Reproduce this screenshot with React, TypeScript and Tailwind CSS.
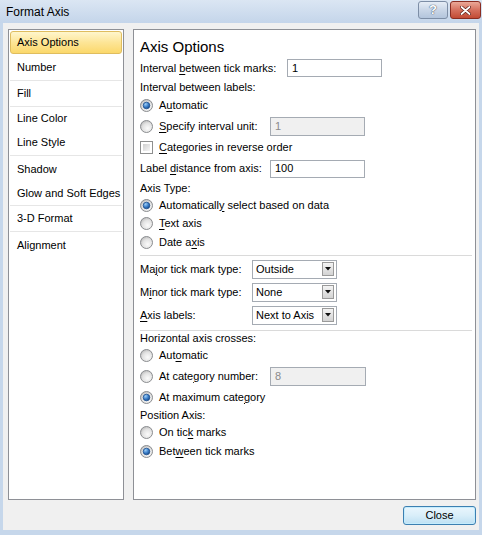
import type { ReactNode } from 'react'

const navItems = [
  { label: 'Axis Options', h: 'h-[23px]', sep: false, active: true },
  { label: 'Number', h: 'h-[27px]', sep: true },
  { label: 'Fill', h: 'h-[26px]', sep: true },
  { label: 'Line Color', h: 'h-[23px]', sep: false },
  { label: 'Line Style', h: 'h-[26px]', sep: true },
  { label: 'Shadow', h: 'h-[26px]', sep: false },
  { label: 'Glow and Soft Edges', h: 'h-[24px]', sep: true },
  { label: '3-D Format', h: 'h-[26px]', sep: true },
  { label: 'Alignment', h: 'h-[26px]', sep: false },
]

function Radio({ checked = false }: { checked?: boolean }) {
  return (
    <svg width="13" height="13" viewBox="0 0 13 13" className="shrink-0">
      <defs>
        <radialGradient id="radioBody" cx="0.6" cy="0.65" r="0.7">
          <stop offset="0" stopColor="#fbfbfb" />
          <stop offset="0.6" stopColor="#e2e2e2" />
          <stop offset="1" stopColor="#b9b9b9" />
        </radialGradient>
        <radialGradient id="radioDot" cx="0.35" cy="0.3" r="0.8">
          <stop offset="0" stopColor="#9fd0f7" />
          <stop offset="0.5" stopColor="#3f82cc" />
          <stop offset="1" stopColor="#103f7c" />
        </radialGradient>
      </defs>
      <circle cx="6.5" cy="6.5" r="6" fill="url(#radioBody)" stroke="#8b8d90" strokeWidth="1" />
      {checked && <circle cx="6.5" cy="6.5" r="3.3" fill="url(#radioDot)" stroke="#1d4f8f" strokeWidth="0.8" />}
    </svg>
  )
}

function Checkbox() {
  return (
    <span className="box-border flex h-[13px] w-[13px] shrink-0 border border-[#8e8f8f] bg-white p-[2px]">
      <span className="flex-1 bg-gradient-to-br from-[#cfcfcf] to-[#f7f7f7]" />
    </span>
  )
}

function TextBox({ value, disabled = false, w, h }: { value: string; disabled?: boolean; w: string; h: string }) {
  return (
    <div
      className={`box-border flex items-center border border-[#a5abb3] pl-[4px] ${w} ${h} ${
        disabled ? 'bg-[#f0f0f0] text-[#8a8a8a]' : 'bg-white text-black'
      }`}
    >
      {value}
    </div>
  )
}

function Select({ value }: { value: string }) {
  return (
    <div className="box-border flex h-[19px] w-[85px] items-center justify-between border border-[#a5abb3] bg-white pl-[3px] pr-[2px]">
      <span>{value}</span>
      <span className="box-border flex h-[14px] w-[12px] items-center justify-center border border-[#9a9a9a] bg-gradient-to-b from-[#f4f4f4] to-[#d3d3d3]">
        <svg width="6" height="4" viewBox="0 0 6 4">
          <path d="M0 0 H6 L3 3.5 Z" fill="#111" />
        </svg>
      </span>
    </div>
  )
}

function RadioRow({ h, checked, children }: { h: string; checked?: boolean; children: ReactNode }) {
  return (
    <div className={`flex items-center ${h}`}>
      <Radio checked={checked} />
      <span className="w-[6px] shrink-0" />
      {children}
    </div>
  )
}

function U({ children }: { children: ReactNode }) {
  return <span className="underline underline-offset-[2px]">{children}</span>
}

export default function App() {
  return (
    <div className="flex h-[535px] w-[482px] flex-col bg-[#c6d7eb] font-['Segoe_UI','Liberation_Sans',Arial,sans-serif] text-[11px] text-black">
      {/* title bar */}
      <div className="flex h-[23px] items-start justify-between bg-gradient-to-b from-[#dbe6f3] to-[#c4d5ea] pl-[6px] pr-[1px] pt-[1px]">
        <span className="flex h-[21px] items-center text-[12px]">Format Axis</span>
        <div className="flex gap-[2px]">
          <div className="box-border flex h-[18px] w-[30px] items-center justify-center rounded-[3px] border border-[#7d8ea6] bg-gradient-to-b from-[#e6edf6] via-[#c9d6e7] to-[#b3c5dc] text-[13px] font-bold text-white [text-shadow:0_0_1px_#3b4c66,0_0_1px_#3b4c66]">
            ?
          </div>
          <div className="box-border flex h-[18px] w-[31px] items-center justify-center rounded-[3px] border border-[#8a2d22] bg-gradient-to-b from-[#eaa898] via-[#d5705e] to-[#c24a34]">
            <svg width="11" height="9" viewBox="0 0 11 9">
              <path d="M1.5 1 L9.5 8 M9.5 1 L1.5 8" stroke="#5a1a12" strokeWidth="3.2" strokeLinecap="round" />
              <path d="M1.5 1 L9.5 8 M9.5 1 L1.5 8" stroke="#fff" strokeWidth="1.8" strokeLinecap="round" />
            </svg>
          </div>
        </div>
      </div>

      {/* body */}
      <div className="mx-[3px] mb-[5px] flex flex-1 flex-col bg-[#f0f0f0] pl-[5px] pr-[3px] pt-[6px]">
        <div className="flex h-[471px] gap-[9px]">
          {/* left nav */}
          <nav className="box-border flex w-[116px] flex-col border border-[#8e9096] bg-white pt-[1px]">
            {navItems.map((item) =>
              item.active ? (
                <div
                  key={item.label}
                  className={`mx-[1px] box-border flex items-center rounded-[3px] border border-[#dfbd5f] bg-gradient-to-b from-[#fff6cc] via-[#fde596] to-[#fbd86a] pl-[6px] ${item.h}`}
                >
                  {item.label}
                </div>
              ) : (
                <div
                  key={item.label}
                  className={`mx-[1px] box-border flex items-center pl-[7px] ${item.h} ${item.sep ? 'border-b border-[#e6e6e6]' : ''}`}
                >
                  {item.label}
                </div>
              )
            )}
          </nav>

          {/* options */}
          <section className="box-border flex flex-1 flex-col border border-[#8e9096] bg-white pl-[6px] pr-[3px]">
            <div className="mt-[6px] flex h-[22px] items-center text-[15px]">Axis Options</div>

            <div className="flex h-[20px] items-center">
              <span className="w-[147px]">
                Interval <U>b</U>etween tick marks:
              </span>
              <TextBox value="1" w="w-[95px]" h="h-[18px]" />
            </div>
            <div className="flex h-[19px] items-center">Interval between labels:</div>
            <RadioRow h="h-[17px]" checked>
              <span>
                A<U>u</U>tomatic
              </span>
            </RadioRow>
            <RadioRow h="h-[24px]">
              <span className="w-[111px]">
                <U>S</U>pecify interval unit:
              </span>
              <TextBox value="1" disabled w="w-[95px]" h="h-[19px]" />
            </RadioRow>
            <div className="flex h-[19px] items-center gap-[6px]">
              <Checkbox />
              <span>
                <U>C</U>ategories in reverse order
              </span>
            </div>
            <div className="flex h-[23px] items-center">
              <span className="w-[130px]">
                Label <U>d</U>istance from axis:
              </span>
              <TextBox value="100" w="w-[95px]" h="h-[18px]" />
            </div>
            <div className="flex h-[16px] items-center">Axis Type:</div>
            <RadioRow h="h-[18px]" checked>
              <span>
                Automaticall<U>y</U> select based on data
              </span>
            </RadioRow>
            <RadioRow h="h-[19px]">
              <span>
                <U>T</U>ext axis
              </span>
            </RadioRow>
            <RadioRow h="h-[19px]">
              <span>
                Date a<U>x</U>is
              </span>
            </RadioRow>

            <div className="mb-[3px] mt-[3px] h-px bg-[#dadada]" />

            <div className="flex flex-col gap-[3px]">
              <div className="flex h-[20px] items-center">
                <span className="w-[112px]">
                  Ma<U>j</U>or tick mark type:
                </span>
                <Select value="Outside" />
              </div>
              <div className="flex h-[20px] items-center">
                <span className="w-[112px]">
                  M<U>i</U>nor tick mark type:
                </span>
                <Select value="None" />
              </div>
              <div className="flex h-[20px] items-center">
                <span className="w-[112px]">
                  <U>A</U>xis labels:
                </span>
                <Select value="Next to Axis" />
              </div>
            </div>

            <div className="mt-[5px] h-px bg-[#dadada]" />

            <div className="flex h-[15px] items-center">Horizontal axis crosses:</div>
            <RadioRow h="h-[18px]">
              <span>
                Aut<U>o</U>matic
              </span>
            </RadioRow>
            <RadioRow h="h-[24px]">
              <span className="w-[111px]">
                At cate<U>g</U>ory number:
              </span>
              <TextBox value="8" disabled w="w-[96px]" h="h-[19px]" />
            </RadioRow>
            <RadioRow h="h-[18px]" checked>
              <span>
                At maximum cate<U>g</U>ory
              </span>
            </RadioRow>
            <div className="flex h-[18px] items-center">Position Axis:</div>
            <RadioRow h="h-[16px]">
              <span>
                On tic<U>k</U> marks
              </span>
            </RadioRow>
            <RadioRow h="h-[22px]" checked>
              <span>
                Bet<U>w</U>een tick marks
              </span>
            </RadioRow>
          </section>
        </div>

        <div className="mt-[6px] flex justify-end">
          <button className="box-border flex h-[19px] w-[73px] items-center justify-center rounded-[3px] border border-[#3c7fb1] bg-gradient-to-b from-[#eaf6fd] via-[#d9eef9] to-[#bde0f3] text-[11px] text-black shadow-[inset_0_0_0_1px_#c4ecfd]">
            Close
          </button>
        </div>
      </div>
    </div>
  )
}
